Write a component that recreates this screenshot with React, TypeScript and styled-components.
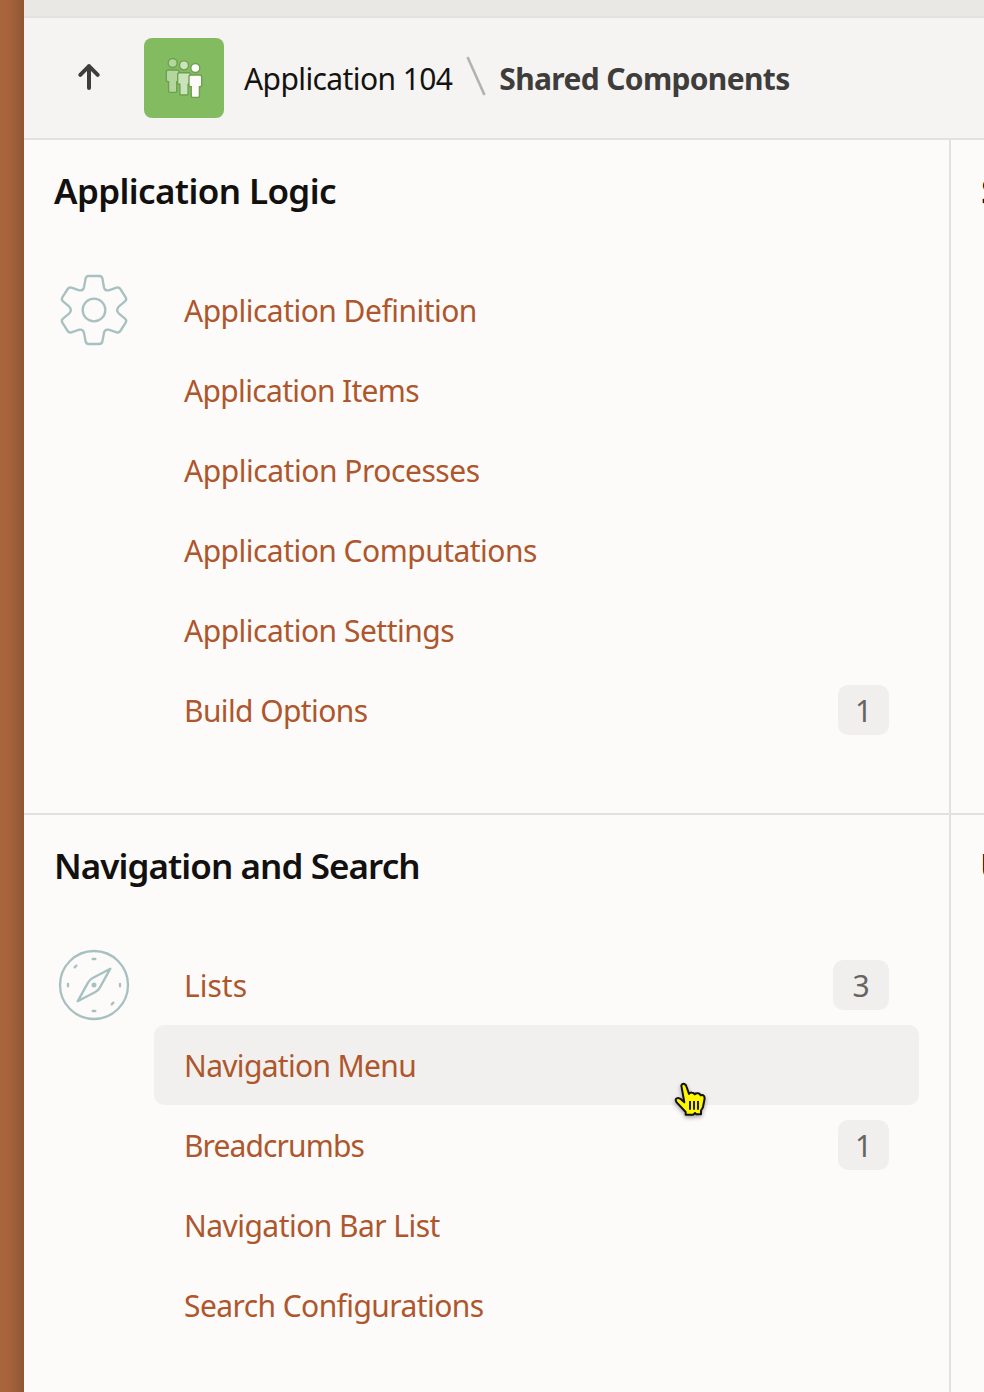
import React from "react";
import styled, { createGlobalStyle } from "styled-components";

const GlobalStyle = createGlobalStyle`
  * { box-sizing: border-box; }
  html, body { margin: 0; padding: 0; }
  body { overflow: hidden; background: #fcfbfa; }
`;

const Page = styled.div`
  display: grid;
  grid-template-columns: 24px 1fr;
  width: 984px;
  height: 1392px;
  overflow: hidden;
  font-family: "Noto Sans", "Open Sans", sans-serif;
  font-size: 30px;
`;

const Rail = styled.aside`
  background: linear-gradient(90deg, #a9653e 0%, #a8633d 35%, #8f5634 100%);
`;

const Main = styled.main`
  display: flex;
  flex-direction: column;
  min-width: 0;
  overflow: hidden;
  background: #fcfbfa;
`;

const TopStrip = styled.div`
  height: 18px;
  flex: none;
  background: #e9e8e4;
  border-bottom: 2px solid #e3e2e0;
`;

const Header = styled.header`
  display: flex;
  align-items: center;
  flex: none;
  height: 122px;
  padding: 0 30px 0 50px;
  background: #f5f4f2;
  border-bottom: 2px solid #e2e1e0;
`;

const UpButton = styled.button`
  display: flex;
  width: 30px;
  height: 32px;
  margin-right: 40px;
  padding: 0;
  border: 0;
  background: none;
`;

const AppIcon = styled.div`
  width: 80px;
  height: 80px;
  margin-right: 20px;
  border-radius: 8px;
  overflow: hidden;
  background: #83bb60;
`;

const Crumb = styled.span<{ $current?: boolean; $track: number }>`
  padding-top: 2px;
  font-weight: ${(p) => (p.$current ? 700 : 400)};
  color: ${(p) => (p.$current ? "#3f3d3b" : "#141311")};
  letter-spacing: ${(p) => p.$track}px;
  line-height: 40px;
  white-space: nowrap;
`;

const Slash = styled.svg`
  flex: none;
  width: 20px;
  height: 40px;
  margin: 0 13px 4px 14px;
`;

const Grid = styled.div`
  display: grid;
  flex: 1;
  grid-template-columns: 927px 1fr;
  grid-template-rows: 675px 1fr;
`;

const Section = styled.section`
  padding: 30px;
  min-width: 0;
  overflow: hidden;
  border-right: 2px solid #e2e1e0;
  border-bottom: 2px solid #e2e1e0;

  &:nth-child(even) {
    border-right: 0;
  }
  &:nth-child(n + 3) {
    border-bottom: 0;
  }
`;

const Title = styled.h2<{ $track: number; $indent?: number }>`
  margin: 0 0 57px;
  height: 43px;
  font-size: 35px;
  font-weight: 600;
  line-height: 42px;
  letter-spacing: ${(p) => p.$track}px;
  text-indent: ${(p) => p.$indent ?? 0}px;
  white-space: nowrap;
  color: #12110f;
`;

const Body = styled.div`
  display: grid;
  grid-template-columns: 80px 1fr;
  column-gap: 20px;
`;

const List = styled.ul`
  margin: 0;
  padding: 0;
  list-style: none;
`;

const Row = styled.li<{ $active?: boolean }>`
  display: flex;
  align-items: center;
  justify-content: space-between;
  height: 80px;
  padding: 0 30px;
  border-radius: 10px;
  background: ${(p) => (p.$active ? "#f1f0ee" : "transparent")};
`;

const Link = styled.a<{ $track: number }>`
  padding-top: 2px;
  color: #ae562c;
  line-height: 40px;
  letter-spacing: ${(p) => p.$track}px;
  white-space: nowrap;
`;

const Badge = styled.span<{ $width: number }>`
  width: ${(p) => p.$width}px;
  height: 50px;
  border-radius: 10px;
  background: #f0efed;
  color: #666462;
  line-height: 52px;
  text-align: center;
`;

const Pointer = styled.svg`
  position: absolute;
  left: 672px;
  top: 1081px;
  width: 38px;
  height: 40px;
  filter: drop-shadow(0 2px 2px rgba(0, 0, 0, 0.35));
`;

const LineArt = styled.svg`
  width: 80px;
  height: 80px;
  fill: none;
  stroke: #a7c1c1;
  stroke-width: 7;
  stroke-linejoin: round;
  stroke-linecap: round;
`;

const ArrowUp = () => (
  <svg width="30" height="32" viewBox="0 0 30 32" fill="none" stroke="#3f3d3b" strokeWidth="4" strokeLinecap="round" strokeLinejoin="round">
    <path d="M15 26V4M6.3 12.8l8.7-8.6 8.7 8.6" />
  </svg>
);

const PERSON =
  "M-10 0H10Q14 0 14 4V21Q14 24 10 24H9V43Q9 46 6 46H-6Q-9 46-9 43V24H-10Q-14 24-14 21V4Q-14 0-10 0Z";

const people = [
  { x: 86, head: 75, body: 96, fill: "#b2d69b" },
  { x: 120, head: 82, body: 104, fill: "#cbe3bb" },
  { x: 154, head: 90, body: 111, fill: "#fcfbfa" },
];

const PeopleIcon = () => (
  <svg width="80" height="80" viewBox="0 0 240 240" stroke="#6c9f4e" strokeWidth="4">
    {people.map((p) => (
      <g key={p.x} fill={p.fill}>
        <circle cx={p.x} cy={p.head} r="13.5" />
        <path transform={`translate(${p.x} ${p.body}) scale(1.36 1.46)`} strokeWidth="3" d={PERSON} />
      </g>
    ))}
  </svg>
);

const GearIcon = () => (
  <LineArt viewBox="42 30 240 240">
    <path d="M146 48H178Q185 48 187 55L192 82Q195 93 206 91L230 83Q237 81 241 87L257 112Q261 119 255 124L236 140Q227 150 236 160L255 176Q261 181 257 188L241 213Q237 219 230 217L206 209Q195 207 192 218L187 245Q185 252 178 252H146Q139 252 137 245L132 218Q129 207 118 209L94 217Q87 219 83 213L67 188Q63 181 69 176L88 160Q97 150 88 140L69 124Q63 119 67 112L83 87Q87 81 94 83L118 91Q129 93 132 82L137 55Q139 48 146 48Z" />
    <circle cx="162" cy="150" r="34" />
  </LineArt>
);

const CompassIcon = () => (
  <LineArt viewBox="42 30 240 240">
    <circle cx="162" cy="150" r="102" />
    <path d="M211 101L158 129Q149 134 144 143L113 199L166 171Q175 166 180 157Z" />
    <circle cx="162" cy="150" r="4" fill="#a7c1c1" />
    <path d="M158 72h8M158 228h8M84 147v7M240 147v7M104 97l5-5M215 208l5-5" />
  </LineArt>
);

type Item = { label: string; track: number; count?: number; width?: number; active?: boolean };

const logicItems: Item[] = [
  { label: "Application Definition", track: -0.52 },
  { label: "Application Items", track: -0.66 },
  { label: "Application Processes", track: -0.46 },
  { label: "Application Computations", track: -0.52 },
  { label: "Application Settings", track: -0.49 },
  { label: "Build Options", track: -0.6, count: 1, width: 51 },
];

const navItems: Item[] = [
  { label: "Lists", track: 0, count: 3, width: 56 },
  { label: "Navigation Menu", track: -0.67, active: true },
  { label: "Breadcrumbs", track: -0.88, count: 1, width: 51 },
  { label: "Navigation Bar List", track: -0.54 },
  { label: "Search Configurations", track: -0.58 },
];

const LinkList = ({ items }: { items: Item[] }) => (
  <List>
    {items.map((item) => (
      <Row key={item.label} $active={item.active}>
        <Link $track={item.track}>{item.label}</Link>
        {item.count !== undefined && <Badge $width={item.width ?? 51}>{item.count}</Badge>}
      </Row>
    ))}
  </List>
);

export default function App() {
  return (
    <>
      <GlobalStyle />
      <Page>
        <Rail />
        <Main>
          <TopStrip />
          <Header>
            <UpButton aria-label="Up"><ArrowUp /></UpButton>
            <AppIcon><PeopleIcon /></AppIcon>
            <Crumb $track={-0.6}>Application 104</Crumb>
            <Slash viewBox="0 0 20 40"><path d="M1.5 1L18.5 39" stroke="#b3b2b0" strokeWidth="2.6" /></Slash>
            <Crumb $current $track={-0.66}>Shared Components</Crumb>
          </Header>
          <Grid>
            <Section>
              <Title $track={-0.62}>Application Logic</Title>
              <Body>
                <GearIcon />
                <LinkList items={logicItems} />
              </Body>
            </Section>
            <Section><Title $track={0}>S</Title></Section>
            <Section>
              <Title $track={-0.93}>Navigation and Search</Title>
              <Body>
                <CompassIcon />
                <LinkList items={navItems} />
              </Body>
            </Section>
            <Section><Title $track={0} $indent={-1}>U</Title></Section>
          </Grid>
        </Main>
      </Page>
      <Pointer viewBox="0 0 114 120">
        <path
          d="M28 14Q30 7 37 9Q42 11 44 18L51 39Q53 34 60 35Q66 35 68 40Q71 36 78 37Q84 38 86 43Q92 40 96 45Q99 50 97 57L93 78Q91 84 87 88V100H73L69 96L64 101H41V93L14 64Q8 55 14 52Q20 49 27 55L37 64Z"
          fill="#fff600" stroke="#111" strokeWidth="6" strokeLinejoin="round"
        />
        <path d="M54 60V86M66 60V86M78 60V86" stroke="#111" strokeWidth="5.5" />
      </Pointer>
    </>
  );
}
